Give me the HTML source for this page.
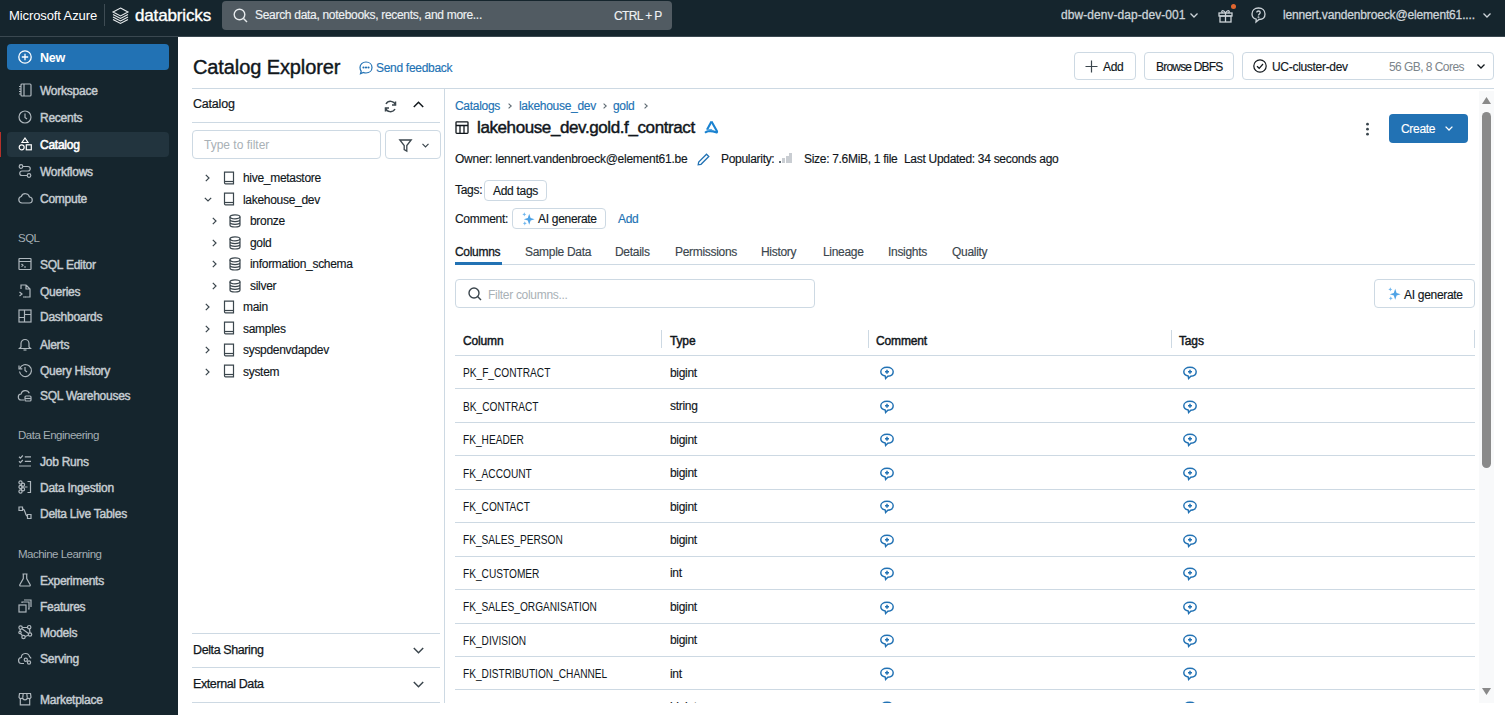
<!DOCTYPE html>
<html><head><meta charset="utf-8">
<style>
*{box-sizing:border-box;margin:0;padding:0}
html,body{width:1505px;height:715px;overflow:hidden;background:#fff;font-family:"Liberation Sans",sans-serif;color:#11171c}
.abs{position:absolute;white-space:nowrap}
.t{font-size:12px;letter-spacing:-0.3px;line-height:15px;-webkit-text-stroke:0.15px currentColor}
#top{position:absolute;left:0;top:0;width:1505px;height:37px;background:#15252d;border-bottom:1px solid #3a4850}
#side{position:absolute;left:0;top:37px;width:178px;height:678px;background:#15252d}
.si{position:absolute;left:7px;width:162px;height:25px;color:#c5ccd1;font-size:12px;-webkit-text-stroke:0.45px #c5ccd1;letter-spacing:-0.25px;line-height:25px;padding-left:33px;white-space:nowrap}
.si svg{position:absolute;left:11px;top:5px;width:14px;height:14px;fill:none;stroke:#aeb7bd;stroke-width:1.2}
.sl{position:absolute;left:18px;color:#a4aeb4;font-size:11.5px;letter-spacing:-0.5px;line-height:14px;white-space:nowrap}
svg{overflow:visible;position:absolute}
</style></head><body>
<div id="top">
<div class="abs" style="left:9px;top:8px;color:#fff;font-size:13px;letter-spacing:-0.1px;line-height:15px">Microsoft Azure</div>
<div class="abs" style="left:104px;top:4px;width:1px;height:22px;background:#3e4c54;"></div>
<svg style="left:112px;top:7px" width="17" height="16" viewBox="0 0 17 16" fill="none" stroke="#e8ecee" stroke-width="1.1"><path d="M8.5 1L16 5 8.5 9 1 5Z"/><path d="M1 7.5L8.5 11.5 16 7.5"/><path d="M1 10L8.5 14 16 10"/><path d="M1 12.5L8.5 16.5 16 12.5"/></svg>
<div class="abs" style="left:135px;top:6px;color:#fff;font-size:17px;letter-spacing:-0.15px;line-height:20px;-webkit-text-stroke:0.35px #fff">databricks</div>
<div class="abs" style="left:222px;top:1px;width:450px;height:29px;background:#515b62;border-radius:4px"><svg style="left:11px;top:7px" width="15" height="15" viewBox="0 0 15 15" fill="none" stroke="#e6eaec" stroke-width="1.4"><circle cx="6.5" cy="6.5" r="5.3"/><path d="M10.5 10.5L14 14"/></svg><div class="abs t" style="left:33px;top:7px;color:#eef1f3">Search data, notebooks, recents, and more...</div><div class="abs t" style="left:392px;top:8px;color:#eef1f3;letter-spacing:-0.6px">CTRL + P</div></div>
<div class="abs t" style="left:1061px;top:8px;color:#ccd3d8;letter-spacing:0.05px;-webkit-text-stroke:0.3px #ccd3d8">dbw-denv-dap-dev-001</div>
<svg style="left:1190px;top:13px" width="8" height="5" viewBox="0 0 8 5" fill="none" stroke="#ccd3d8" stroke-width="1.3"><path d="M0.5 0.5L4 4 7.5 0.5"/></svg>
<svg style="left:1218px;top:8px" width="15" height="15" viewBox="0 0 15 15" fill="none" stroke="#ccd3d8" stroke-width="1.3"><rect x="1" y="5" width="13" height="3"/><rect x="2" y="8" width="11" height="6"/><path d="M7.5 5V14"/><path d="M7.5 5C5 1 2.5 3 4.5 5M7.5 5C10 1 12.5 3 10.5 5"/></svg>
<div class="abs" style="left:1231px;top:4px;width:5px;height:5px;border-radius:50%;background:#e0662f"></div>
<svg style="left:1251px;top:7px" width="15" height="16" viewBox="0 0 15 16" fill="none" stroke="#ccd3d8" stroke-width="1.3"><path d="M7.5 1C11.5 1 14 3.5 14 7 14 10.5 11.5 12.5 8 12.5L5 15 5.2 12.2C2.5 11.5 1 9.5 1 7 1 3.5 3.5 1 7.5 1Z"/><path d="M5.8 5.5C5.8 3.5 9.2 3.5 9.2 5.5 9.2 7 7.5 7 7.5 8.5"/><circle cx="7.5" cy="10.2" r="0.3" fill="#ccd3d8"/></svg>
<div class="abs t" style="left:1283px;top:8px;color:#ccd3d8;letter-spacing:-0.15px;-webkit-text-stroke:0.3px #ccd3d8">lennert.vandenbroeck@element61....</div>
<svg style="left:1483px;top:13px" width="8" height="5" viewBox="0 0 8 5" fill="none" stroke="#ccd3d8" stroke-width="1.3"><path d="M0.5 0.5L4 4 7.5 0.5"/></svg>
</div>
<div id="side">
<div class="abs" style="left:7px;top:7px;width:162px;height:26px;background:#2272b4;border-radius:4px"><svg style="left:11px;top:6px" width="14" height="14" viewBox="0 0 14 14" fill="none" stroke="#fff" stroke-width="1.3"><circle cx="7" cy="7" r="6.2"/><path d="M7 3.8V10.2M3.8 7H10.2"/></svg><div class="abs" style="left:33px;top:1px;line-height:26px;color:#fff;font-size:12.5px;font-weight:bold;letter-spacing:-0.3px">New</div></div>
<div class="si" style="top:41.0px"><svg viewBox="0 0 14 14"><rect x="3" y="1" width="10" height="12" rx="1"/><path d="M6 1V13M1 3.5H3M1 6H3M1 8.5H3M1 11H3"/></svg><span style="position:relative;top:1px">Workspace</span></div>
<div class="si" style="top:68.1px"><svg viewBox="0 0 14 14"><circle cx="7" cy="7" r="6"/><path d="M7 3.5V7.5L9 9"/></svg><span style="position:relative;top:1px">Recents</span></div>
<div class="abs" style="left:0px;top:95px;width:1px;height:25px;background:#b5312a;"></div>
<div class="abs" style="left:7px;top:95px;width:162px;height:25px;background:#22343e;border-radius:4px"></div>
<div class="si" style="top:95.0px;color:#fff;-webkit-text-stroke:0.55px #fff"><svg viewBox="0 0 14 14" style="stroke:#fff;top:5px"><path d="M7 1L10 5.5H4Z"/><circle cx="3.7" cy="10.3" r="2.5"/><rect x="8.3" y="7.8" width="5" height="5"/></svg><span style="position:relative;top:1px">Catalog</span></div>
<div class="si" style="top:122.1px"><svg viewBox="0 0 14 14"><circle cx="3" cy="2.5" r="1.8"/><circle cx="11" cy="11.5" r="1.8"/><path d="M4.8 2.5H10a2.2 2.2 0 0 1 0 4.5H4a2.2 2.2 0 0 0 0 4.5H9.2"/></svg><span style="position:relative;top:1px">Workflows</span></div>
<div class="si" style="top:149.1px"><svg viewBox="0 0 14 14"><path d="M4 12H11a3 3 0 0 0 0.5-6A4.3 4.3 0 0 0 3.3 5.5 3.3 3.3 0 0 0 4 12Z"/></svg><span style="position:relative;top:1px">Compute</span></div>
<div class="si" style="top:215.2px"><svg viewBox="0 0 14 14"><rect x="1" y="1.5" width="12" height="11" rx="0.5"/><path d="M1 4.5H13M3.5 7L5 8.3 3.5 9.6M6 10H8"/></svg><span style="position:relative;top:1px">SQL Editor</span></div>
<div class="si" style="top:241.6px"><svg viewBox="0 0 14 14"><path d="M8 1H3V5M8 1L12 5V13H7M8 1V5H12"/><path d="M1.5 8L4 10 1.5 12M5 13H7.5"/></svg><span style="position:relative;top:1px">Queries</span></div>
<div class="si" style="top:267.0px"><svg viewBox="0 0 14 14"><rect x="1" y="1" width="12" height="12"/><path d="M6.5 1V13M1 8.5H6.5M6.5 5.5H13"/></svg><span style="position:relative;top:1px">Dashboards</span></div>
<div class="si" style="top:294.6px"><svg viewBox="0 0 14 14"><path d="M3 10V6.5a4 4 0 0 1 8 0V10L12.5 11.5H1.5Z"/><path d="M5.5 13H8.5"/></svg><span style="position:relative;top:1px">Alerts</span></div>
<div class="si" style="top:320.6px"><svg viewBox="0 0 14 14"><path d="M1.8 5.5A6 6 0 1 1 1.5 8.5"/><path d="M1 2.5V5.8H4.3M7 4V7.5L9 9"/></svg><span style="position:relative;top:1px">Query History</span></div>
<div class="si" style="top:346.2px"><svg viewBox="0 0 14 14"><path d="M6 12H3.5a3 3 0 0 1-0.4-6A4.3 4.3 0 0 1 11.3 5.3"/><rect x="7" y="8" width="6" height="5" rx="1"/><path d="M7 10.5H13"/></svg><span style="position:relative;top:1px">SQL Warehouses</span></div>
<div class="si" style="top:411.6px"><svg viewBox="0 0 14 14"><path d="M1 2.8L2.4 4.1 4.8 1.5M6.8 2.8H13M1 7.3L2.4 8.6 4.8 6M6.8 7.3H13M1 12H13"/></svg><span style="position:relative;top:1px">Job Runs</span></div>
<div class="si" style="top:437.6px"><svg viewBox="0 0 14 14"><circle cx="2.5" cy="2.5" r="1.6"/><circle cx="2.5" cy="7" r="1.6"/><circle cx="2.5" cy="11.5" r="1.6"/><circle cx="5" cy="4.8" r="1.6"/><circle cx="5" cy="9.3" r="1.6"/><path d="M6.6 7H9.5M9.5 1.5H12.5V12.5H9.5"/></svg><span style="position:relative;top:1px">Data Ingestion</span></div>
<div class="si" style="top:463.6px"><svg viewBox="0 0 14 14"><path d="M1 1H4.5V4.5H1ZM4.5 2.8C8 2.8 6.5 10.5 10 10.5M9.5 8.5H13V12.5H9.5Z"/></svg><span style="position:relative;top:1px">Delta Live Tables</span></div>
<div class="si" style="top:530.6px"><svg viewBox="0 0 14 14"><path d="M4.5 1H9.5M5.3 1V5.5L1.8 11.8C1.5 12.4 1.9 13 2.6 13H11.4C12.1 13 12.5 12.4 12.2 11.8L8.7 5.5V1"/></svg><span style="position:relative;top:1px">Experiments</span></div>
<div class="si" style="top:556.6px"><svg viewBox="0 0 14 14"><rect x="1" y="6" width="7" height="7"/><path d="M4 4V3H11V10H10M6 1H13V8"/></svg><span style="position:relative;top:1px">Features</span></div>
<div class="si" style="top:582.6px"><svg viewBox="0 0 14 14"><circle cx="2.6" cy="2.6" r="1.7"/><circle cx="11.2" cy="2.2" r="1.7"/><circle cx="12" cy="9.5" r="1.7"/><circle cx="5.5" cy="12" r="1.7"/><circle cx="2" cy="7.5" r="1.2"/><path d="M4.3 2.5H9.5M4 3.8L10.5 8.5M11.5 3.9L12 7.8M10.3 10.2L7.2 11.5M4.5 10.5L2.5 8.6M2.3 4.3L2 6.3"/></svg><span style="position:relative;top:1px">Models</span></div>
<div class="si" style="top:608.6px"><svg viewBox="0 0 14 14"><path d="M6 12.5H3.8A3 3 0 0 1 3.3 6.5 4.2 4.2 0 0 1 11.6 5.8 3 3 0 0 1 13 7.5"/><circle cx="7.8" cy="8.8" r="1.6"/><circle cx="11" cy="11.5" r="1.6"/></svg><span style="position:relative;top:1px">Serving</span></div>
<div class="si" style="top:649.6px"><svg viewBox="0 0 14 14"><path d="M1.5 1.5H12.5L13 5.2A2 2 0 0 1 9.3 5.5 2.2 2.2 0 0 1 4.7 5.5 2 2 0 0 1 1 5.2Z"/><path d="M2.3 6.8V12.8H11.7V6.8M5.2 1.5L4.8 5.3M8.8 1.5L9.2 5.3"/></svg><span style="position:relative;top:1px">Marketplace</span></div>
<div class="sl" style="top:193.8px">SQL</div>
<div class="sl" style="top:390.5px">Data Engineering</div>
<div class="sl" style="top:509.5px">Machine Learning</div>
</div>
<div id="main">
<div class="abs" style="left:193px;top:55px;font-size:20px;letter-spacing:-0.1px;line-height:24px;color:#11171c;-webkit-text-stroke:0.4px #11171c">Catalog Explorer</div>
<svg style="left:359px;top:61px" width="14" height="14" viewBox="0 0 14 14" fill="none" stroke="#2272b4" stroke-width="1.2"><path d="M7 1C10.5 1 13 3.4 13 6.5S10.5 12 7 12C6 12 5.2 11.8 4.4 11.5L1.5 12.8 2.2 10.2C1.4 9.2 1 8 1 6.5 1 3.4 3.5 1 7 1Z"/><circle cx="4.5" cy="6.5" r="0.5" fill="#2272b4"/><circle cx="7" cy="6.5" r="0.5" fill="#2272b4"/><circle cx="9.5" cy="6.5" r="0.5" fill="#2272b4"/></svg>
<div class="abs t" style="left:376px;top:61px;color:#2272b4">Send feedback</div>
<div style="position:absolute;border:1px solid #cdd9e3;border-radius:4px;background:#fff;left:1074px;top:52px;width:62px;height:28px"><svg style="left:10px;top:7px" width="13" height="13" viewBox="0 0 13 13" stroke="#3b464d" stroke-width="1.2"><path d="M6.5 0.5V12.5M0.5 6.5H12.5"/></svg><div class="abs t" style="left:28px;top:7px;">Add</div></div>
<div style="position:absolute;border:1px solid #cdd9e3;border-radius:4px;background:#fff;left:1144px;top:52px;width:90px;height:28px"><div class="abs t" style="left:11px;top:7px;letter-spacing:-0.8px">Browse DBFS</div></div>
<div style="position:absolute;border:1px solid #cdd9e3;border-radius:4px;background:#fff;left:1242px;top:52px;width:252px;height:28px"><svg style="left:10px;top:6px" width="14" height="14" viewBox="0 0 14 14" fill="none" stroke="#11171c" stroke-width="1.2"><circle cx="7" cy="7" r="6.2"/><path d="M4 7.2L6.2 9.3 10 5"/></svg><div class="abs t" style="left:29px;top:7px;">UC-cluster-dev</div><div class="abs t" style="left:146px;top:7px;color:#7c858b;letter-spacing:-0.55px;-webkit-text-stroke:0">56 GB, 8 Cores</div><svg style="left:234px;top:11px" width="8" height="5" viewBox="0 0 8 5" fill="none" stroke="#11171c" stroke-width="1.3"><path d="M0.5 0.5L4 4 7.5 0.5"/></svg></div>
<div class="abs" style="left:192px;top:88px;width:1302px;height:1px;background:#cdd9e3;"></div>
<div class="abs" style="left:444px;top:88px;width:1px;height:615px;background:#cdd9e3;"></div>
<div class="abs" style="left:193px;top:97px;font-size:12.5px;letter-spacing:-0.2px;line-height:15px;-webkit-text-stroke:0.2px #11171c">Catalog</div>
<svg style="left:384px;top:100px" width="13" height="13" viewBox="0 0 13 13" fill="none" stroke="#3b464d" stroke-width="1.5"><path d="M11.5 5A5.2 5.2 0 0 0 2 4M1.5 8A5.2 5.2 0 0 0 11 9"/><path d="M11.5 1.5V5H8M1.5 11.5V8H5"/></svg>
<svg style="left:413px;top:101px" width="11" height="7" viewBox="0 0 11 7" fill="none" stroke="#11171c" stroke-width="1.5"><path d="M0.8 6L5.5 1.3 10.2 6"/></svg>
<div class="abs" style="left:192px;top:122px;width:248px;height:1px;background:#cdd9e3;"></div>
<div style="position:absolute;border:1px solid #cdd9e3;border-radius:4px;background:#fff;left:192px;top:130px;width:189px;height:29px"><div class="abs t" style="left:11px;top:7px;color:#a9b1b6;letter-spacing:0;-webkit-text-stroke:0">Type to filter</div></div>
<div style="position:absolute;border:1px solid #cdd9e3;border-radius:4px;background:#fff;left:385px;top:130px;width:56px;height:29px"><svg style="left:13px;top:8px" width="13" height="13" viewBox="0 0 13 13" fill="none" stroke="#3b464d" stroke-width="1.3"><path d="M0.8 1H12.2L7.8 6.5V12L5.2 10.5V6.5Z"/></svg><svg style="left:36px;top:12px" width="7" height="5" viewBox="0 0 7 5" fill="none" stroke="#3b464d" stroke-width="1.2"><path d="M0.5 0.8L3.5 3.8 6.5 0.8"/></svg></div>
<svg style="left:205px;top:174.0px" width="5" height="8" viewBox="0 0 5 8" fill="none" stroke="#3b464d" stroke-width="1.2"><path d="M0.8 0.8L4 4 0.8 7.2"/></svg>
<svg style="left:223px;top:170.5px" width="12" height="14" viewBox="0 0 12 14" fill="none" stroke="#3b464d" stroke-width="1.2"><path d="M1.5 1.2H10.5V12.8H2.5A1 1 0 0 1 1.5 11.8Z"/><path d="M1.5 10.5H10.5"/></svg>
<div class="abs t" style="left:243px;top:171.0px;">hive_metastore</div>
<svg style="left:204px;top:197.0px" width="8" height="5" viewBox="0 0 8 5" fill="none" stroke="#3b464d" stroke-width="1.2"><path d="M0.8 0.8L4 4 7.2 0.8"/></svg>
<svg style="left:223px;top:192.0px" width="12" height="14" viewBox="0 0 12 14" fill="none" stroke="#3b464d" stroke-width="1.2"><path d="M1.5 1.2H10.5V12.8H2.5A1 1 0 0 1 1.5 11.8Z"/><path d="M1.5 10.5H10.5"/></svg>
<div class="abs t" style="left:243px;top:192.5px;">lakehouse_dev</div>
<svg style="left:212px;top:217.0px" width="5" height="8" viewBox="0 0 5 8" fill="none" stroke="#3b464d" stroke-width="1.2"><path d="M0.8 0.8L4 4 0.8 7.2"/></svg>
<svg style="left:229px;top:214.0px" width="12" height="14" viewBox="0 0 12 14" fill="none" stroke="#3b464d" stroke-width="1.2"><ellipse cx="6" cy="2.8" rx="5" ry="2"/><path d="M1 2.8V11C1 12.1 3.2 13 6 13S11 12.1 11 11V2.8M1 5.6C1 6.7 3.2 7.6 6 7.6S11 6.7 11 5.6M1 8.3C1 9.4 3.2 10.3 6 10.3S11 9.4 11 8.3"/></svg>
<div class="abs t" style="left:250px;top:214.0px;">bronze</div>
<svg style="left:212px;top:238.5px" width="5" height="8" viewBox="0 0 5 8" fill="none" stroke="#3b464d" stroke-width="1.2"><path d="M0.8 0.8L4 4 0.8 7.2"/></svg>
<svg style="left:229px;top:235.5px" width="12" height="14" viewBox="0 0 12 14" fill="none" stroke="#3b464d" stroke-width="1.2"><ellipse cx="6" cy="2.8" rx="5" ry="2"/><path d="M1 2.8V11C1 12.1 3.2 13 6 13S11 12.1 11 11V2.8M1 5.6C1 6.7 3.2 7.6 6 7.6S11 6.7 11 5.6M1 8.3C1 9.4 3.2 10.3 6 10.3S11 9.4 11 8.3"/></svg>
<div class="abs t" style="left:250px;top:235.5px;">gold</div>
<svg style="left:212px;top:260.0px" width="5" height="8" viewBox="0 0 5 8" fill="none" stroke="#3b464d" stroke-width="1.2"><path d="M0.8 0.8L4 4 0.8 7.2"/></svg>
<svg style="left:229px;top:257.0px" width="12" height="14" viewBox="0 0 12 14" fill="none" stroke="#3b464d" stroke-width="1.2"><ellipse cx="6" cy="2.8" rx="5" ry="2"/><path d="M1 2.8V11C1 12.1 3.2 13 6 13S11 12.1 11 11V2.8M1 5.6C1 6.7 3.2 7.6 6 7.6S11 6.7 11 5.6M1 8.3C1 9.4 3.2 10.3 6 10.3S11 9.4 11 8.3"/></svg>
<div class="abs t" style="left:250px;top:257.0px;">information_schema</div>
<svg style="left:212px;top:281.5px" width="5" height="8" viewBox="0 0 5 8" fill="none" stroke="#3b464d" stroke-width="1.2"><path d="M0.8 0.8L4 4 0.8 7.2"/></svg>
<svg style="left:229px;top:278.5px" width="12" height="14" viewBox="0 0 12 14" fill="none" stroke="#3b464d" stroke-width="1.2"><ellipse cx="6" cy="2.8" rx="5" ry="2"/><path d="M1 2.8V11C1 12.1 3.2 13 6 13S11 12.1 11 11V2.8M1 5.6C1 6.7 3.2 7.6 6 7.6S11 6.7 11 5.6M1 8.3C1 9.4 3.2 10.3 6 10.3S11 9.4 11 8.3"/></svg>
<div class="abs t" style="left:250px;top:278.5px;">silver</div>
<svg style="left:205px;top:303.0px" width="5" height="8" viewBox="0 0 5 8" fill="none" stroke="#3b464d" stroke-width="1.2"><path d="M0.8 0.8L4 4 0.8 7.2"/></svg>
<svg style="left:223px;top:299.5px" width="12" height="14" viewBox="0 0 12 14" fill="none" stroke="#3b464d" stroke-width="1.2"><path d="M1.5 1.2H10.5V12.8H2.5A1 1 0 0 1 1.5 11.8Z"/><path d="M1.5 10.5H10.5"/></svg>
<div class="abs t" style="left:243px;top:300.0px;">main</div>
<svg style="left:205px;top:324.5px" width="5" height="8" viewBox="0 0 5 8" fill="none" stroke="#3b464d" stroke-width="1.2"><path d="M0.8 0.8L4 4 0.8 7.2"/></svg>
<svg style="left:223px;top:321.0px" width="12" height="14" viewBox="0 0 12 14" fill="none" stroke="#3b464d" stroke-width="1.2"><path d="M1.5 1.2H10.5V12.8H2.5A1 1 0 0 1 1.5 11.8Z"/><path d="M1.5 10.5H10.5"/></svg>
<div class="abs t" style="left:243px;top:321.5px;">samples</div>
<svg style="left:205px;top:346.0px" width="5" height="8" viewBox="0 0 5 8" fill="none" stroke="#3b464d" stroke-width="1.2"><path d="M0.8 0.8L4 4 0.8 7.2"/></svg>
<svg style="left:223px;top:342.5px" width="12" height="14" viewBox="0 0 12 14" fill="none" stroke="#3b464d" stroke-width="1.2"><path d="M1.5 1.2H10.5V12.8H2.5A1 1 0 0 1 1.5 11.8Z"/><path d="M1.5 10.5H10.5"/></svg>
<div class="abs t" style="left:243px;top:343.0px;">syspdenvdapdev</div>
<svg style="left:205px;top:367.5px" width="5" height="8" viewBox="0 0 5 8" fill="none" stroke="#3b464d" stroke-width="1.2"><path d="M0.8 0.8L4 4 0.8 7.2"/></svg>
<svg style="left:223px;top:364.0px" width="12" height="14" viewBox="0 0 12 14" fill="none" stroke="#3b464d" stroke-width="1.2"><path d="M1.5 1.2H10.5V12.8H2.5A1 1 0 0 1 1.5 11.8Z"/><path d="M1.5 10.5H10.5"/></svg>
<div class="abs t" style="left:243px;top:364.5px;">system</div>
<div class="abs" style="left:192px;top:633px;width:248px;height:1px;background:#cdd9e3;"></div>
<div class="abs" style="left:193px;top:643px;font-size:12.5px;letter-spacing:-0.4px;line-height:15px;-webkit-text-stroke:0.25px #11171c">Delta Sharing</div>
<svg style="left:413px;top:647px" width="11" height="7" viewBox="0 0 11 7" fill="none" stroke="#3b464d" stroke-width="1.5"><path d="M0.8 1L5.5 5.7 10.2 1"/></svg>
<div class="abs" style="left:192px;top:667px;width:248px;height:1px;background:#cdd9e3;"></div>
<div class="abs" style="left:193px;top:677px;font-size:12.5px;letter-spacing:-0.4px;line-height:15px;-webkit-text-stroke:0.25px #11171c">External Data</div>
<svg style="left:413px;top:681px" width="11" height="7" viewBox="0 0 11 7" fill="none" stroke="#3b464d" stroke-width="1.5"><path d="M0.8 1L5.5 5.7 10.2 1"/></svg>
<div class="abs" style="left:192px;top:702px;width:248px;height:1px;background:#cdd9e3;"></div>
<div class="abs t" style="left:455px;top:99px;color:#2272b4">Catalogs</div>
<div class="abs t" style="left:519px;top:99px;color:#2272b4">lakehouse_dev</div>
<div class="abs t" style="left:613px;top:99px;color:#2272b4">gold</div>
<svg style="left:508px;top:103px" width="4" height="6" viewBox="0 0 4 6" fill="none" stroke="#5f6b73" stroke-width="1.1"><path d="M0.6 0.6L3.2 3 0.6 5.4"/></svg>
<svg style="left:603px;top:103px" width="4" height="6" viewBox="0 0 4 6" fill="none" stroke="#5f6b73" stroke-width="1.1"><path d="M0.6 0.6L3.2 3 0.6 5.4"/></svg>
<svg style="left:644px;top:103px" width="4" height="6" viewBox="0 0 4 6" fill="none" stroke="#5f6b73" stroke-width="1.1"><path d="M0.6 0.6L3.2 3 0.6 5.4"/></svg>
<svg style="left:455px;top:121px" width="14" height="13" viewBox="0 0 14 13" fill="none" stroke="#11171c" stroke-width="1.3"><rect x="1" y="0.8" width="12" height="11.5" rx="0.8"/><path d="M1 4.5H13M5 4.5V12.3M9 4.5V12.3"/></svg>
<div class="abs" style="left:477px;top:118px;font-size:17px;letter-spacing:-0.4px;line-height:20px;-webkit-text-stroke:0.45px #11171c">lakehouse_dev.gold.f_contract</div>
<svg style="left:704px;top:120px" width="15" height="14" viewBox="0 0 15 14" fill="none" stroke="#1a82d0" stroke-width="2.1" stroke-linejoin="round"><path d="M7.5 1.5L13 11.3C13.3 12 12.8 12.6 12 12.3 9.5 11.3 7 10.8 4 11.3 3 11.5 2 12 1 12.8"/><path d="M7.5 1.5L3 9.8"/><path d="M3.5 9.6H8.2" stroke-width="1.3" stroke="#5aaee8"/></svg>
<svg style="left:1365px;top:122px" width="5" height="15" viewBox="0 0 5 15" fill="#3b464d"><circle cx="2.5" cy="2.2" r="1.4"/><circle cx="2.5" cy="7.2" r="1.4"/><circle cx="2.5" cy="12.2" r="1.4"/></svg>
<div class="abs" style="left:1389px;top:114px;width:79px;height:29px;background:#2272b4;border-radius:4px"><div class="abs t" style="left:12px;top:8px;color:#fff">Create</div><svg style="left:56px;top:12px" width="8" height="5" viewBox="0 0 8 5" fill="none" stroke="#fff" stroke-width="1.3"><path d="M0.6 0.6L4 4 7.4 0.6"/></svg></div>
<div class="abs t" style="left:455px;top:152px;letter-spacing:-0.25px">Owner: lennert.vandenbroeck@element61.be</div>
<svg style="left:697px;top:153px" width="13" height="13" viewBox="0 0 13 13" fill="none" stroke="#2272b4" stroke-width="1.3"><path d="M9.5 1.2L11.8 3.5 4 11.3 1.2 11.8 1.7 9Z"/></svg>
<div class="abs t" style="left:721px;top:152px;">Popularity:</div>
<div class="abs" style="left:779px;top:161px;width:2px;height:2px;background:#5f6b73;"></div><div class="abs" style="left:782px;top:158px;width:3px;height:5px;background:#c9cdd2;"></div><div class="abs" style="left:786px;top:156px;width:3px;height:7px;background:#c9cdd2;"></div><div class="abs" style="left:789px;top:153px;width:3px;height:10px;background:#c9cdd2;"></div>
<div class="abs t" style="left:804px;top:152px;">Size: 7.6MiB, 1 file</div>
<div class="abs t" style="left:904px;top:152px;">Last Updated: 34 seconds ago</div>
<div class="abs t" style="left:455px;top:183px;">Tags:</div>
<div style="position:absolute;border:1px solid #cdd9e3;border-radius:4px;background:#fff;left:484px;top:180px;width:63px;height:21px"><div class="abs t" style="left:8px;top:3px;">Add tags</div></div>
<div class="abs t" style="left:455px;top:212px;">Comment:</div>
<div style="position:absolute;border:1px solid #cdd9e3;border-radius:4px;background:#fff;left:512px;top:208px;width:94px;height:21px"><svg style="left:9px;top:3px" width="12" height="13" viewBox="0 0 12 13"><path d="M7.2 1.8L8.6 6 12.6 7.3 8.6 8.6 7.2 12.8 5.8 8.6 1.8 7.3 5.8 6Z" fill="#4fa3e6"/><path d="M2.3 0.3L2.9 1.8 4.3 2.4 2.9 3 2.3 4.5 1.7 3 0.3 2.4 1.7 1.8Z" fill="#6fb6ee"/><path d="M2.8 9.2L3.4 10.7 4.8 11.3 3.4 11.9 2.8 13.4 2.2 11.9 0.8 11.3 2.2 10.7Z" fill="#6fb6ee"/></svg><div class="abs t" style="left:25px;top:3px;">AI generate</div></div>
<div class="abs t" style="left:618px;top:212px;color:#2272b4">Add</div>
<div class="abs t" style="left:455px;top:245px;color:#11171c;-webkit-text-stroke:0.3px #11171c">Columns</div>
<div class="abs t" style="left:525px;top:245px;color:#3b464d">Sample Data</div>
<div class="abs t" style="left:615px;top:245px;color:#3b464d">Details</div>
<div class="abs t" style="left:675px;top:245px;color:#3b464d">Permissions</div>
<div class="abs t" style="left:761px;top:245px;color:#3b464d">History</div>
<div class="abs t" style="left:823px;top:245px;color:#3b464d">Lineage</div>
<div class="abs t" style="left:888px;top:245px;color:#3b464d">Insights</div>
<div class="abs t" style="left:952px;top:245px;color:#3b464d">Quality</div>
<div class="abs" style="left:455px;top:264px;width:1020px;height:1px;background:#cdd9e3;"></div>
<div class="abs" style="left:455px;top:262px;width:47px;height:3px;background:#2272b4;"></div>
<div style="position:absolute;border:1px solid #cdd9e3;border-radius:4px;background:#fff;left:455px;top:279px;width:360px;height:29px"><svg style="left:12px;top:7px" width="14" height="14" viewBox="0 0 14 14" fill="none" stroke="#3b464d" stroke-width="1.4"><circle cx="6" cy="6" r="5"/><path d="M9.6 9.6L13 13"/></svg><div class="abs t" style="left:32px;top:8px;color:#a9b1b6;-webkit-text-stroke:0">Filter columns...</div></div>
<div style="position:absolute;border:1px solid #cdd9e3;border-radius:4px;background:#fff;left:1374px;top:279px;width:101px;height:29px"><svg style="left:13px;top:7px" width="12" height="13" viewBox="0 0 12 13"><path d="M7.2 1.8L8.6 6 12.6 7.3 8.6 8.6 7.2 12.8 5.8 8.6 1.8 7.3 5.8 6Z" fill="#4fa3e6"/><path d="M2.3 0.3L2.9 1.8 4.3 2.4 2.9 3 2.3 4.5 1.7 3 0.3 2.4 1.7 1.8Z" fill="#6fb6ee"/><path d="M2.8 9.2L3.4 10.7 4.8 11.3 3.4 11.9 2.8 13.4 2.2 11.9 0.8 11.3 2.2 10.7Z" fill="#6fb6ee"/></svg><div class="abs t" style="left:29px;top:8px;">AI generate</div></div>
<div class="abs" style="left:661px;top:330px;width:1px;height:18px;background:#cdd9e3;"></div>
<div class="abs" style="left:868px;top:330px;width:1px;height:18px;background:#cdd9e3;"></div>
<div class="abs" style="left:1171px;top:330px;width:1px;height:18px;background:#cdd9e3;"></div>
<div class="abs" style="left:1474px;top:330px;width:1px;height:18px;background:#cdd9e3;"></div>
<div class="abs" style="left:463px;top:334px;font-size:12px;letter-spacing:-0.15px;line-height:15px;-webkit-text-stroke:0.45px #11171c">Column</div>
<div class="abs" style="left:670px;top:334px;font-size:12px;letter-spacing:-0.15px;line-height:15px;-webkit-text-stroke:0.45px #11171c">Type</div>
<div class="abs" style="left:876px;top:334px;font-size:12px;letter-spacing:-0.15px;line-height:15px;-webkit-text-stroke:0.45px #11171c">Comment</div>
<div class="abs" style="left:1179px;top:334px;font-size:12px;letter-spacing:-0.15px;line-height:15px;-webkit-text-stroke:0.45px #11171c">Tags</div>
<div class="abs" style="left:445px;top:340px;width:1034px;height:363px;overflow:hidden">
<div class="abs" style="left:10px;top:15px;width:1020px;height:1px;background:#cdd9e3;"></div>
<div class="abs" style="left:18px;top:25.2px;font-size:13px;line-height:15px;transform:scaleX(0.78);transform-origin:0 0">PK_F_CONTRACT</div>
<div class="abs t" style="left:225px;top:25.7px;">bigint</div>
<svg style="left:435px;top:26.4px" width="14" height="13" viewBox="0 0 14 13" fill="none" stroke="#2272b4" stroke-width="1.45"><path d="M7 1.2C10.5 1.2 13.2 3.1 13.2 5.7 13.2 8.2 10.8 10 7.8 10.2L5.6 12.4 5.2 10C2.7 9.4 0.8 7.8 0.8 5.7 0.8 3.1 3.5 1.2 7 1.2Z"/><path d="M7 3.7V7.7M5 5.7H9" stroke-width="1.5"/></svg>
<svg style="left:738px;top:26.4px" width="14" height="13" viewBox="0 0 14 13" fill="none" stroke="#2272b4" stroke-width="1.45"><path d="M7 1.2C10.5 1.2 13.2 3.1 13.2 5.7 13.2 8.2 10.8 10 7.8 10.2L5.6 12.4 5.2 10C2.7 9.4 0.8 7.8 0.8 5.7 0.8 3.1 3.5 1.2 7 1.2Z"/><path d="M7 3.7V7.7M5 5.7H9" stroke-width="1.5"/></svg>
<div class="abs" style="left:10px;top:48px;width:1020px;height:1px;background:#cdd9e3;"></div>
<div class="abs" style="left:18px;top:58.6px;font-size:13px;line-height:15px;transform:scaleX(0.78);transform-origin:0 0">BK_CONTRACT</div>
<div class="abs t" style="left:225px;top:59.1px;">string</div>
<svg style="left:435px;top:59.8px" width="14" height="13" viewBox="0 0 14 13" fill="none" stroke="#2272b4" stroke-width="1.45"><path d="M7 1.2C10.5 1.2 13.2 3.1 13.2 5.7 13.2 8.2 10.8 10 7.8 10.2L5.6 12.4 5.2 10C2.7 9.4 0.8 7.8 0.8 5.7 0.8 3.1 3.5 1.2 7 1.2Z"/><path d="M7 3.7V7.7M5 5.7H9" stroke-width="1.5"/></svg>
<svg style="left:738px;top:59.8px" width="14" height="13" viewBox="0 0 14 13" fill="none" stroke="#2272b4" stroke-width="1.45"><path d="M7 1.2C10.5 1.2 13.2 3.1 13.2 5.7 13.2 8.2 10.8 10 7.8 10.2L5.6 12.4 5.2 10C2.7 9.4 0.8 7.8 0.8 5.7 0.8 3.1 3.5 1.2 7 1.2Z"/><path d="M7 3.7V7.7M5 5.7H9" stroke-width="1.5"/></svg>
<div class="abs" style="left:10px;top:82px;width:1020px;height:1px;background:#cdd9e3;"></div>
<div class="abs" style="left:18px;top:92.1px;font-size:13px;line-height:15px;transform:scaleX(0.78);transform-origin:0 0">FK_HEADER</div>
<div class="abs t" style="left:225px;top:92.6px;">bigint</div>
<svg style="left:435px;top:93.3px" width="14" height="13" viewBox="0 0 14 13" fill="none" stroke="#2272b4" stroke-width="1.45"><path d="M7 1.2C10.5 1.2 13.2 3.1 13.2 5.7 13.2 8.2 10.8 10 7.8 10.2L5.6 12.4 5.2 10C2.7 9.4 0.8 7.8 0.8 5.7 0.8 3.1 3.5 1.2 7 1.2Z"/><path d="M7 3.7V7.7M5 5.7H9" stroke-width="1.5"/></svg>
<svg style="left:738px;top:93.3px" width="14" height="13" viewBox="0 0 14 13" fill="none" stroke="#2272b4" stroke-width="1.45"><path d="M7 1.2C10.5 1.2 13.2 3.1 13.2 5.7 13.2 8.2 10.8 10 7.8 10.2L5.6 12.4 5.2 10C2.7 9.4 0.8 7.8 0.8 5.7 0.8 3.1 3.5 1.2 7 1.2Z"/><path d="M7 3.7V7.7M5 5.7H9" stroke-width="1.5"/></svg>
<div class="abs" style="left:10px;top:115px;width:1020px;height:1px;background:#cdd9e3;"></div>
<div class="abs" style="left:18px;top:125.5px;font-size:13px;line-height:15px;transform:scaleX(0.78);transform-origin:0 0">FK_ACCOUNT</div>
<div class="abs t" style="left:225px;top:126.0px;">bigint</div>
<svg style="left:435px;top:126.7px" width="14" height="13" viewBox="0 0 14 13" fill="none" stroke="#2272b4" stroke-width="1.45"><path d="M7 1.2C10.5 1.2 13.2 3.1 13.2 5.7 13.2 8.2 10.8 10 7.8 10.2L5.6 12.4 5.2 10C2.7 9.4 0.8 7.8 0.8 5.7 0.8 3.1 3.5 1.2 7 1.2Z"/><path d="M7 3.7V7.7M5 5.7H9" stroke-width="1.5"/></svg>
<svg style="left:738px;top:126.7px" width="14" height="13" viewBox="0 0 14 13" fill="none" stroke="#2272b4" stroke-width="1.45"><path d="M7 1.2C10.5 1.2 13.2 3.1 13.2 5.7 13.2 8.2 10.8 10 7.8 10.2L5.6 12.4 5.2 10C2.7 9.4 0.8 7.8 0.8 5.7 0.8 3.1 3.5 1.2 7 1.2Z"/><path d="M7 3.7V7.7M5 5.7H9" stroke-width="1.5"/></svg>
<div class="abs" style="left:10px;top:149px;width:1020px;height:1px;background:#cdd9e3;"></div>
<div class="abs" style="left:18px;top:159.0px;font-size:13px;line-height:15px;transform:scaleX(0.78);transform-origin:0 0">FK_CONTACT</div>
<div class="abs t" style="left:225px;top:159.5px;">bigint</div>
<svg style="left:435px;top:160.2px" width="14" height="13" viewBox="0 0 14 13" fill="none" stroke="#2272b4" stroke-width="1.45"><path d="M7 1.2C10.5 1.2 13.2 3.1 13.2 5.7 13.2 8.2 10.8 10 7.8 10.2L5.6 12.4 5.2 10C2.7 9.4 0.8 7.8 0.8 5.7 0.8 3.1 3.5 1.2 7 1.2Z"/><path d="M7 3.7V7.7M5 5.7H9" stroke-width="1.5"/></svg>
<svg style="left:738px;top:160.2px" width="14" height="13" viewBox="0 0 14 13" fill="none" stroke="#2272b4" stroke-width="1.45"><path d="M7 1.2C10.5 1.2 13.2 3.1 13.2 5.7 13.2 8.2 10.8 10 7.8 10.2L5.6 12.4 5.2 10C2.7 9.4 0.8 7.8 0.8 5.7 0.8 3.1 3.5 1.2 7 1.2Z"/><path d="M7 3.7V7.7M5 5.7H9" stroke-width="1.5"/></svg>
<div class="abs" style="left:10px;top:182px;width:1020px;height:1px;background:#cdd9e3;"></div>
<div class="abs" style="left:18px;top:192.4px;font-size:13px;line-height:15px;transform:scaleX(0.78);transform-origin:0 0">FK_SALES_PERSON</div>
<div class="abs t" style="left:225px;top:192.9px;">bigint</div>
<svg style="left:435px;top:193.6px" width="14" height="13" viewBox="0 0 14 13" fill="none" stroke="#2272b4" stroke-width="1.45"><path d="M7 1.2C10.5 1.2 13.2 3.1 13.2 5.7 13.2 8.2 10.8 10 7.8 10.2L5.6 12.4 5.2 10C2.7 9.4 0.8 7.8 0.8 5.7 0.8 3.1 3.5 1.2 7 1.2Z"/><path d="M7 3.7V7.7M5 5.7H9" stroke-width="1.5"/></svg>
<svg style="left:738px;top:193.6px" width="14" height="13" viewBox="0 0 14 13" fill="none" stroke="#2272b4" stroke-width="1.45"><path d="M7 1.2C10.5 1.2 13.2 3.1 13.2 5.7 13.2 8.2 10.8 10 7.8 10.2L5.6 12.4 5.2 10C2.7 9.4 0.8 7.8 0.8 5.7 0.8 3.1 3.5 1.2 7 1.2Z"/><path d="M7 3.7V7.7M5 5.7H9" stroke-width="1.5"/></svg>
<div class="abs" style="left:10px;top:216px;width:1020px;height:1px;background:#cdd9e3;"></div>
<div class="abs" style="left:18px;top:225.8px;font-size:13px;line-height:15px;transform:scaleX(0.78);transform-origin:0 0">FK_CUSTOMER</div>
<div class="abs t" style="left:225px;top:226.3px;">int</div>
<svg style="left:435px;top:227.0px" width="14" height="13" viewBox="0 0 14 13" fill="none" stroke="#2272b4" stroke-width="1.45"><path d="M7 1.2C10.5 1.2 13.2 3.1 13.2 5.7 13.2 8.2 10.8 10 7.8 10.2L5.6 12.4 5.2 10C2.7 9.4 0.8 7.8 0.8 5.7 0.8 3.1 3.5 1.2 7 1.2Z"/><path d="M7 3.7V7.7M5 5.7H9" stroke-width="1.5"/></svg>
<svg style="left:738px;top:227.0px" width="14" height="13" viewBox="0 0 14 13" fill="none" stroke="#2272b4" stroke-width="1.45"><path d="M7 1.2C10.5 1.2 13.2 3.1 13.2 5.7 13.2 8.2 10.8 10 7.8 10.2L5.6 12.4 5.2 10C2.7 9.4 0.8 7.8 0.8 5.7 0.8 3.1 3.5 1.2 7 1.2Z"/><path d="M7 3.7V7.7M5 5.7H9" stroke-width="1.5"/></svg>
<div class="abs" style="left:10px;top:249px;width:1020px;height:1px;background:#cdd9e3;"></div>
<div class="abs" style="left:18px;top:259.3px;font-size:13px;line-height:15px;transform:scaleX(0.78);transform-origin:0 0">FK_SALES_ORGANISATION</div>
<div class="abs t" style="left:225px;top:259.8px;">bigint</div>
<svg style="left:435px;top:260.5px" width="14" height="13" viewBox="0 0 14 13" fill="none" stroke="#2272b4" stroke-width="1.45"><path d="M7 1.2C10.5 1.2 13.2 3.1 13.2 5.7 13.2 8.2 10.8 10 7.8 10.2L5.6 12.4 5.2 10C2.7 9.4 0.8 7.8 0.8 5.7 0.8 3.1 3.5 1.2 7 1.2Z"/><path d="M7 3.7V7.7M5 5.7H9" stroke-width="1.5"/></svg>
<svg style="left:738px;top:260.5px" width="14" height="13" viewBox="0 0 14 13" fill="none" stroke="#2272b4" stroke-width="1.45"><path d="M7 1.2C10.5 1.2 13.2 3.1 13.2 5.7 13.2 8.2 10.8 10 7.8 10.2L5.6 12.4 5.2 10C2.7 9.4 0.8 7.8 0.8 5.7 0.8 3.1 3.5 1.2 7 1.2Z"/><path d="M7 3.7V7.7M5 5.7H9" stroke-width="1.5"/></svg>
<div class="abs" style="left:10px;top:283px;width:1020px;height:1px;background:#cdd9e3;"></div>
<div class="abs" style="left:18px;top:292.7px;font-size:13px;line-height:15px;transform:scaleX(0.78);transform-origin:0 0">FK_DIVISION</div>
<div class="abs t" style="left:225px;top:293.2px;">bigint</div>
<svg style="left:435px;top:293.9px" width="14" height="13" viewBox="0 0 14 13" fill="none" stroke="#2272b4" stroke-width="1.45"><path d="M7 1.2C10.5 1.2 13.2 3.1 13.2 5.7 13.2 8.2 10.8 10 7.8 10.2L5.6 12.4 5.2 10C2.7 9.4 0.8 7.8 0.8 5.7 0.8 3.1 3.5 1.2 7 1.2Z"/><path d="M7 3.7V7.7M5 5.7H9" stroke-width="1.5"/></svg>
<svg style="left:738px;top:293.9px" width="14" height="13" viewBox="0 0 14 13" fill="none" stroke="#2272b4" stroke-width="1.45"><path d="M7 1.2C10.5 1.2 13.2 3.1 13.2 5.7 13.2 8.2 10.8 10 7.8 10.2L5.6 12.4 5.2 10C2.7 9.4 0.8 7.8 0.8 5.7 0.8 3.1 3.5 1.2 7 1.2Z"/><path d="M7 3.7V7.7M5 5.7H9" stroke-width="1.5"/></svg>
<div class="abs" style="left:10px;top:316px;width:1020px;height:1px;background:#cdd9e3;"></div>
<div class="abs" style="left:18px;top:326.2px;font-size:13px;line-height:15px;transform:scaleX(0.78);transform-origin:0 0">FK_DISTRIBUTION_CHANNEL</div>
<div class="abs t" style="left:225px;top:326.7px;">int</div>
<svg style="left:435px;top:327.4px" width="14" height="13" viewBox="0 0 14 13" fill="none" stroke="#2272b4" stroke-width="1.45"><path d="M7 1.2C10.5 1.2 13.2 3.1 13.2 5.7 13.2 8.2 10.8 10 7.8 10.2L5.6 12.4 5.2 10C2.7 9.4 0.8 7.8 0.8 5.7 0.8 3.1 3.5 1.2 7 1.2Z"/><path d="M7 3.7V7.7M5 5.7H9" stroke-width="1.5"/></svg>
<svg style="left:738px;top:327.4px" width="14" height="13" viewBox="0 0 14 13" fill="none" stroke="#2272b4" stroke-width="1.45"><path d="M7 1.2C10.5 1.2 13.2 3.1 13.2 5.7 13.2 8.2 10.8 10 7.8 10.2L5.6 12.4 5.2 10C2.7 9.4 0.8 7.8 0.8 5.7 0.8 3.1 3.5 1.2 7 1.2Z"/><path d="M7 3.7V7.7M5 5.7H9" stroke-width="1.5"/></svg>
<div class="abs" style="left:10px;top:349px;width:1020px;height:1px;background:#cdd9e3;"></div>
<div class="abs" style="left:18px;top:359.6px;font-size:13px;line-height:15px;transform:scaleX(0.78);transform-origin:0 0">FK_CURRENCY</div>
<div class="abs t" style="left:225px;top:360.1px;">bigint</div>
<svg style="left:435px;top:360.8px" width="14" height="13" viewBox="0 0 14 13" fill="none" stroke="#2272b4" stroke-width="1.45"><path d="M7 1.2C10.5 1.2 13.2 3.1 13.2 5.7 13.2 8.2 10.8 10 7.8 10.2L5.6 12.4 5.2 10C2.7 9.4 0.8 7.8 0.8 5.7 0.8 3.1 3.5 1.2 7 1.2Z"/><path d="M7 3.7V7.7M5 5.7H9" stroke-width="1.5"/></svg>
<svg style="left:738px;top:360.8px" width="14" height="13" viewBox="0 0 14 13" fill="none" stroke="#2272b4" stroke-width="1.45"><path d="M7 1.2C10.5 1.2 13.2 3.1 13.2 5.7 13.2 8.2 10.8 10 7.8 10.2L5.6 12.4 5.2 10C2.7 9.4 0.8 7.8 0.8 5.7 0.8 3.1 3.5 1.2 7 1.2Z"/><path d="M7 3.7V7.7M5 5.7H9" stroke-width="1.5"/></svg>
</div>
<div class="abs" style="left:1479px;top:91px;width:15px;height:612px;background:#f8f9fa;"></div>
<svg style="left:1482px;top:97px" width="9" height="7" viewBox="0 0 9 7" fill="#898989"><path d="M0 7L4.5 0 9 7Z"/></svg>
<div class="abs" style="left:1482px;top:112px;width:9px;height:356px;background:#8a8a8a;border-radius:4.5px"></div>
<svg style="left:1482px;top:688px" width="9" height="7" viewBox="0 0 9 7" fill="#898989"><path d="M0 0L4.5 7 9 0Z"/></svg>
</div>
</body></html>
